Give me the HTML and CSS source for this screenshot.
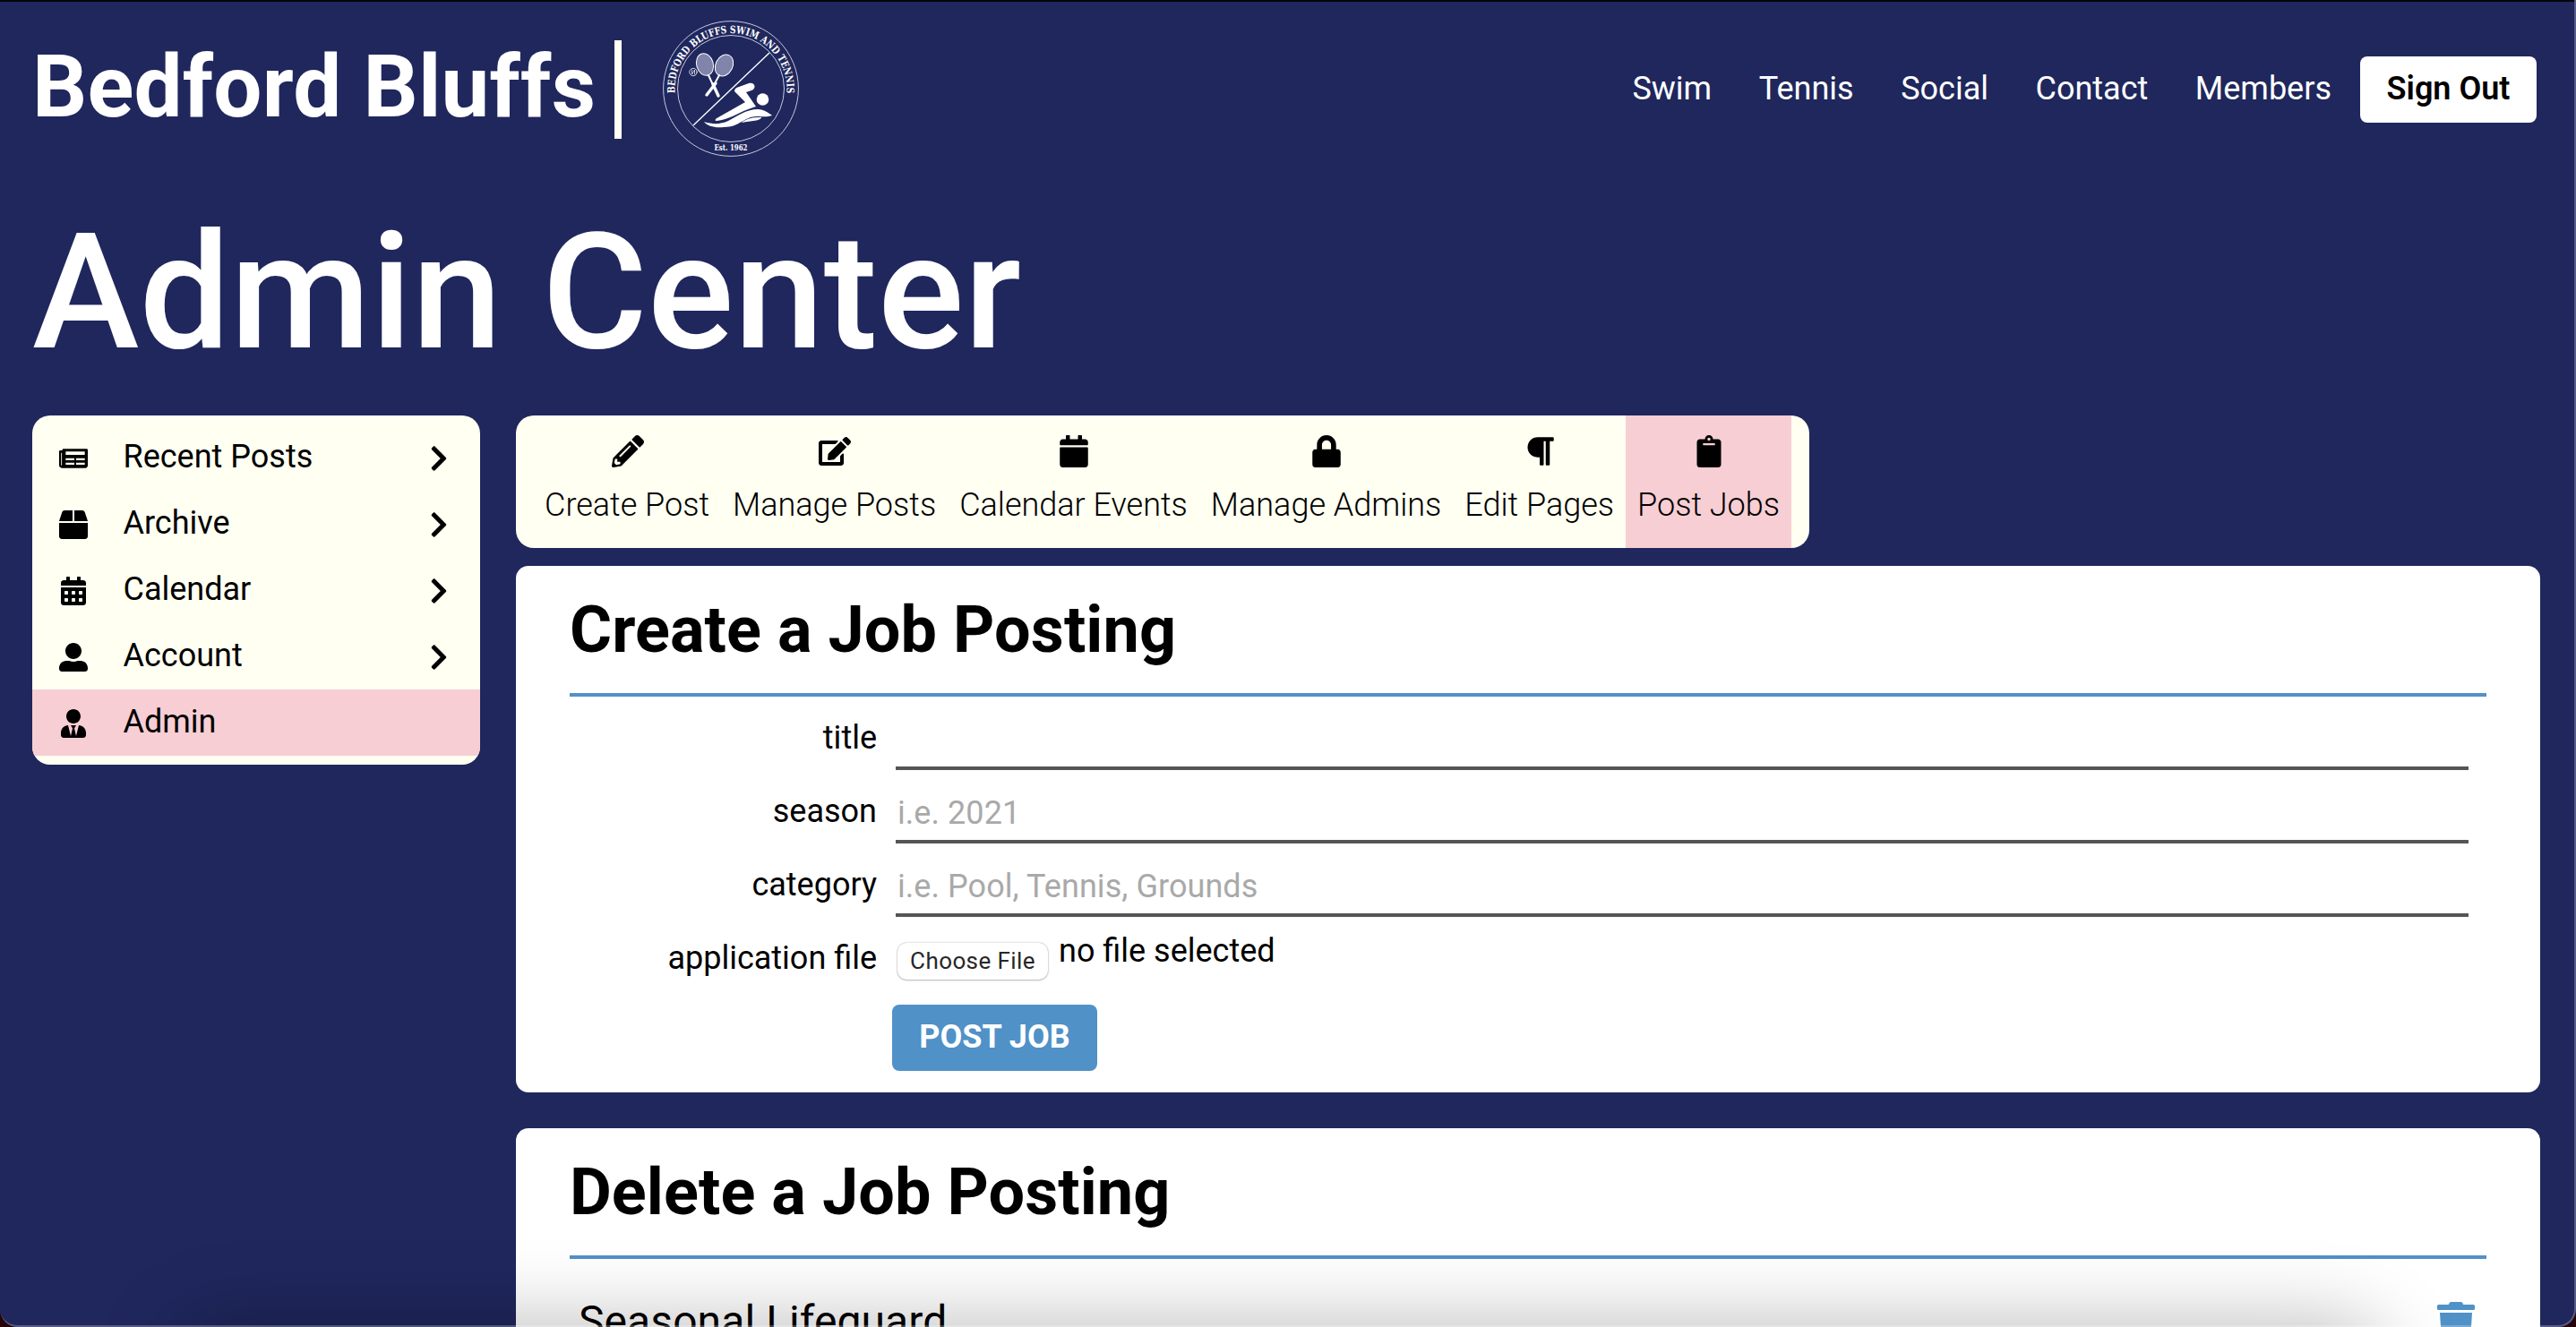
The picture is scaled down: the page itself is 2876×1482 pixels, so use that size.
FILE: index.html
```html
<!DOCTYPE html>
<html lang="en">
<head>
<meta charset="utf-8">
<title>Bedford Bluffs - Admin Center</title>
<link rel="stylesheet" href="styles.css">
</head>
<body>
<div class="window">
  <header class="header">
    <a class="brand"><span class="brand-name">Bedford Bluffs</span></a>
    <svg class="logo" viewBox="0 0 152 152" fill="none" stroke="#fff">
      <defs>
        <path id="arc-top" d="M13.700 81.500A62.500 62.500 0 1 1 138.300 81.500"/>
        <pattern id="mesh" width="2" height="2" patternUnits="userSpaceOnUse"><rect width="2" height="2" fill="#8488ad" stroke="none"/><rect width="1" height="1" fill="#777ba4" stroke="none"/></pattern>
        <symbol id="chevron" viewBox="0 0 320 512"><path d="M285.476 272.971L91.132 467.314c-9.373 9.373-24.569 9.373-33.941 0l-22.667-22.667c-9.357-9.357-9.375-24.522-.04-33.901L188.505 256 34.484 101.255c-9.335-9.379-9.317-24.544.04-33.901l22.667-22.667c9.373-9.373 24.569-9.373 33.941 0L285.475 239.03c9.373 9.372 9.373 24.568.001 33.941z"/></symbol>
      </defs>
      <circle cx="76" cy="76" r="75.4" stroke-width="1" stroke="#c5c8dc"/>
      <circle cx="76" cy="76" r="59.5" stroke-width="1" stroke="#c5c8dc"/>
      <path d="M119 36L34 117" stroke-width="1.4"/>
      <text class="logo-arc"><textPath href="#arc-top" startOffset="50%" text-anchor="middle" textLength="205" lengthAdjust="spacingAndGlyphs">BEDFORD BLUFFS SWIM AND TENNIS</textPath></text>
      <text class="logo-est" x="76" y="144.500" text-anchor="middle" textLength="37" lengthAdjust="spacingAndGlyphs">Est. 1962</text>
      <g stroke-linecap="round">
        <ellipse cx="47" cy="49" rx="9.300" ry="12.500" transform="rotate(-16 47 49)" fill="url(#mesh)" stroke-width="1"/>
        <ellipse cx="68.500" cy="50" rx="9.500" ry="12.500" transform="rotate(27 68.500 50)" fill="url(#mesh)" stroke-width="1"/>
        <path d="M51 61L57 74M63 61L57 72" stroke-width="2"/>
        <path d="M56 71L62 84M59 70L49 83" stroke-width="3.400"/>
        <circle cx="34" cy="57.500" r="4.200" stroke-width=".8"/>
        <path d="M32.500 55v5l3-5v5" stroke-width=".7"/>
      </g>
      <g fill="#fff" stroke="none">
        <circle cx="111.500" cy="88" r="6.800"/>
        <path d="M80 79C80 76 82 75 85 74L96 70C103 68 105 76 99 78L93 80L104 96C98 98 92 100 84 104C76 108 66 112 59 112C58 110 60 109 62 108L92 91L83 82Z"/>
        <path d="M46 113C56 116 64 116 73 112C84 106 94 99 106 99C113 99 118 103 122 106C116 108 112 107 105 107C91 107 86 119 68 119C58 120 50 118 46 113Z"/>
        <path d="M88 114C94 109 100 108 110 108C110 112 98 112 88 114Z"/>
      </g>
    </svg>
    <nav class="nav">
      <a>Swim</a><a>Tennis</a><a>Social</a><a>Contact</a><a>Members</a>
      <button class="sign-out">Sign Out</button>
    </nav>
  </header>

  <h1 class="page-title">Admin Center</h1>

  <div class="layout">
    <aside class="sidebar">
      <a class="side-item">
        <svg class="side-icon" viewBox="0 0 576 512"><path fill-rule="evenodd" d="M552 64H88c-13 0-24 11-24 24v8H24c-13 0-24 11-24 24v272c0 31 25 56 56 56h472c26 0 48-22 48-48V88c0-13-11-24-24-24zM40 144h16v248q-8 16-16 0zM132 118h384v68H132zM132 250h174v40H132zM342 250h174v40H342zM132 342h174v40H132zM342 342h174v40H342z"/></svg>
        <span>Recent Posts</span>
        <svg class="chevron"><use href="#chevron"/></svg>
      </a>
      <a class="side-item">
        <svg class="side-icon" viewBox="0 0 512 512"><path d="M509.5 184.6L458.9 32.8C452.4 13.2 434.1 0 413.4 0H272v192h238.7c-.4-2.500-.4-5-1.200-7.400zM240 0H98.600c-20.700 0-39 13.200-45.500 32.800L2.500 184.600c-.8 2.400-.8 4.900-1.200 7.400H240V0zM0 224v240c0 26.500 21.500 48 48 48h416c26.500 0 48-21.500 48-48V224H0z"/></svg>
        <span>Archive</span>
        <svg class="chevron"><use href="#chevron"/></svg>
      </a>
      <a class="side-item">
        <svg class="side-icon" viewBox="0 0 448 512"><path d="M0 464c0 26.500 21.500 48 48 48h352c26.500 0 48-21.500 48-48V192H0v272zm320-196c0-6.600 5.400-12 12-12h40c6.600 0 12 5.400 12 12v40c0 6.600-5.400 12-12 12h-40c-6.600 0-12-5.400-12-12v-40zm0 128c0-6.600 5.400-12 12-12h40c6.600 0 12 5.400 12 12v40c0 6.600-5.400 12-12 12h-40c-6.600 0-12-5.400-12-12v-40zM192 268c0-6.600 5.400-12 12-12h40c6.600 0 12 5.400 12 12v40c0 6.600-5.400 12-12 12h-40c-6.600 0-12-5.400-12-12v-40zm0 128c0-6.600 5.400-12 12-12h40c6.600 0 12 5.400 12 12v40c0 6.600-5.400 12-12 12h-40c-6.600 0-12-5.400-12-12v-40zM64 268c0-6.600 5.400-12 12-12h40c6.600 0 12 5.400 12 12v40c0 6.600-5.400 12-12 12H76c-6.600 0-12-5.400-12-12v-40zm0 128c0-6.600 5.400-12 12-12h40c6.600 0 12 5.400 12 12v40c0 6.600-5.400 12-12 12H76c-6.600 0-12-5.400-12-12v-40zM400 64h-48V16c0-8.800-7.200-16-16-16h-32c-8.800 0-16 7.200-16 16v48H160V16c0-8.800-7.200-16-16-16h-32c-8.800 0-16 7.200-16 16v48H48C21.500 64 0 85.500 0 112v48h448v-48c0-26.500-21.500-48-48-48z"/></svg>
        <span>Calendar</span>
        <svg class="chevron"><use href="#chevron"/></svg>
      </a>
      <a class="side-item">
        <svg class="side-icon" viewBox="0 0 512 512"><path d="M256 288c79.500 0 144-64.500 144-144S335.500 0 256 0 112 64.500 112 144s64.500 144 144 144zm128 32h-55.100c-22.200 10.200-46.900 16-72.900 16s-50.600-5.800-72.900-16H128C57.300 320 0 377.300 0 448v16c0 26.500 21.500 48 48 48h416c26.500 0 48-21.500 48-48v-16c0-70.700-57.300-128-128-128z"/></svg>
        <span>Account</span>
        <svg class="chevron"><use href="#chevron"/></svg>
      </a>
      <a class="side-item active">
        <svg class="side-icon" viewBox="0 0 448 512"><path d="M224 256c70.700 0 128-57.300 128-128S294.700 0 224 0 96 57.300 96 128s57.300 128 128 128zm95.800 32.600L272 480l-32-136 32-56h-96l32 56-32 136-47.800-191.400C56.900 292 0 350.300 0 422.400V464c0 26.500 21.500 48 48 48h352c26.500 0 48-21.500 48-48v-41.600c0-72.100-56.900-130.400-128.200-133.800z"/></svg>
        <span>Admin</span>
      </a>
    </aside>

    <main class="content">
      <div class="toolbar">
        <a class="tool"><svg viewBox="0 0 512 512"><path d="M497.9 142.1l-46.1 46.1c-4.7 4.7-12.3 4.7-17 0l-111-111c-4.7-4.7-4.7-12.3 0-17l46.1-46.1c18.7-18.7 49.1-18.7 67.9 0l60.1 60.1c18.8 18.7 18.8 49.1 0 67.9zM284.2 99.8L21.6 362.4.4 483.9c-2.9 16.4 11.4 30.6 27.8 27.8l121.5-21.3 262.6-262.6c4.7-4.7 4.7-12.3 0-17l-111-111c-4.8-4.7-12.4-4.7-17.1 0zM124.1 339.9c-5.5-5.5-5.5-14.3 0-19.8l154-154c5.5-5.5 14.3-5.5 19.8 0s5.5 14.3 0 19.8l-154 154c-5.5 5.5-14.3 5.5-19.8 0zM88 424h48v36.3l-64.5 11.3-31.1-31.1L51.7 376H88v48z"/></svg><span>Create Post</span></a>
        <a class="tool"><svg viewBox="0 0 576 512"><path d="M402.6 83.2l90.2 90.2c3.8 3.8 3.8 10 0 13.8L274.4 405.6l-92.8 10.3c-12.4 1.4-22.9-9.1-21.5-21.5l10.3-92.8L388.8 83.2c3.8-3.8 10-3.8 13.8 0zm162-22.9l-48.8-48.8c-15.2-15.2-39.9-15.2-55.2 0l-35.4 35.4c-3.8 3.8-3.8 10 0 13.8l90.2 90.2c3.8 3.8 10 3.8 13.8 0l35.4-35.4c15.2-15.3 15.2-40 0-55.2zM384 346.2V448H64V128h229.8c3.2 0 6.2-1.3 8.5-3.5l40-40c7.6-7.6 2.2-20.5-8.5-20.5H48C21.5 64 0 85.5 0 112v352c0 26.5 21.5 48 48 48h352c26.5 0 48-21.5 48-48V306.2c0-10.7-12.9-16-20.5-8.5l-40 40c-2.2 2.3-3.5 5.3-3.5 8.5z"/></svg><span>Manage Posts</span></a>
        <a class="tool"><svg viewBox="0 0 448 512"><path d="M12 192h424c6.6 0 12 5.4 12 12v260c0 26.5-21.5 48-48 48H48c-26.5 0-48-21.5-48-48V204c0-6.6 5.4-12 12-12zm436-44v-36c0-26.5-21.5-48-48-48h-48V12c0-6.6-5.4-12-12-12h-40c-6.6 0-12 5.4-12 12v52H160V12c0-6.6-5.4-12-12-12h-40c-6.6 0-12 5.4-12 12v52H48C21.5 64 0 85.5 0 112v36c0 6.6 5.4 12 12 12h424c6.6 0 12-5.4 12-12z"/></svg><span>Calendar Events</span></a>
        <a class="tool"><svg viewBox="0 0 448 512"><path d="M400 224h-24v-72C376 68.2 307.8 0 224 0S72 68.2 72 152v72H48c-26.5 0-48 21.5-48 48v192c0 26.5 21.5 48 48 48h352c26.5 0 48-21.5 48-48V272c0-26.5-21.5-48-48-48zm-104 0H152v-72c0-39.7 32.3-72 72-72s72 32.3 72 72v72z"/></svg><span>Manage Admins</span></a>
        <a class="tool"><svg viewBox="0 0 448 512"><path d="M448 48v32a16 16 0 0 1-16 16h-48v368a16 16 0 0 1-16 16h-32a16 16 0 0 1-16-16V96h-32v368a16 16 0 0 1-16 16h-32a16 16 0 0 1-16-16V352h-32a160 160 0 0 1 0-320h240a16 16 0 0 1 16 16z"/></svg><span>Edit Pages</span></a>
        <a class="tool active"><svg viewBox="0 0 384 512"><path d="M384 112v352c0 26.51-21.49 48-48 48H48c-26.51 0-48-21.49-48-48V112c0-26.51 21.49-48 48-48h80c0-35.29 28.71-64 64-64s64 28.71 64 64h80c26.51 0 48 21.49 48 48zM192 40c-13.255 0-24 10.745-24 24s10.745 24 24 24 24-10.745 24-24-10.745-24-24-24m96 114v-20a6 6 0 0 0-6-6H102a6 6 0 0 0-6 6v20a6 6 0 0 0 6 6h180a6 6 0 0 0 6-6z"/></svg><span>Post Jobs</span></a>
      </div>

      <section class="card">
        <h2>Create a Job Posting</h2>
        <form class="form">
          <label for="title">title</label>
          <input class="field" id="title" type="text">
          <label for="season">season</label>
          <input class="field" id="season" type="text" placeholder="i.e. 2021">
          <label for="category">category</label>
          <input class="field" id="category" type="text" placeholder="i.e. Pool, Tennis, Grounds">
          <label>application file</label>
          <div class="file"><button type="button" class="choose">Choose File</button><span>no file selected</span></div>
          <button type="button" class="submit">POST JOB</button>
        </form>
      </section>

      <section class="card">
        <h2>Delete a Job Posting</h2>
        <div class="job">
          <span>Seasonal Lifeguard</span>
          <svg class="trash" viewBox="0 0 448 512"><path d="M432 32H312l-9.400-18.700A24 24 0 0 0 281.100 0H166.800a23.720 23.720 0 0 0-21.400 13.300L136 32H16A16 16 0 0 0 0 48v32a16 16 0 0 0 16 16h416a16 16 0 0 0 16-16V48a16 16 0 0 0-16-16zM53.200 467a48 48 0 0 0 47.900 45h245.800a48 48 0 0 0 47.900-45L416 128H32z"/></svg>
        </div>
      </section>
    </main>
  </div>
  <div class="dock-shadow"></div>
  <div class="window-edge"></div>
</div>
</body>
</html>
```
FILE: styles.css
```css
* { box-sizing: border-box; }

html { background: #000; }

body {
  margin: 0;
  height: 1482px;
  overflow: hidden;
  font-family: Roboto, "Liberation Sans", sans-serif;
  font-size: 36px;
  line-height: 42px;
  color: #000;
}

button, input { font: inherit; border: 0; margin: 0; }

.window {
  position: relative;
  height: 1482px;
  overflow: hidden;
  padding: 0 36px;
  background: #1f275d;
}

/* header */
.header {
  display: flex;
  align-items: center;
  height: 200px;
}

.brand {
  display: flex;
  align-items: center;
  height: 110px;
  padding-right: 21px;
  border-right: 8px solid #fffff2;
}

.brand-name {
  color: #fff;
  font-size: 96px;
  line-height: 112px;
  font-weight: 700;
  letter-spacing: .2px;
  margin-top: -6px;
}

.logo {
  width: 152px;
  height: 152px;
  margin: -2px 0 0 46px;
}

.logo-arc, .logo-est {
  fill: #fff;
  stroke: none;
  font-family: "DejaVu Serif", serif;
  font-weight: 700;
}

.logo-arc { font-size: 11.500px; }
.logo-est { font-size: 8.500px; }

.nav {
  display: flex;
  align-items: center;
  margin-left: auto;
  margin-right: 8px;
  color: #fff;
}

.nav a { margin: -2px 52.500px 0 0; }
.nav a:nth-of-type(5) { margin-right: 32px; }

.sign-out {
  width: 197px;
  height: 74px;
  padding: 0 0 2px;
  border-radius: 8px;
  background: #fff;
  color: #000;
  font-weight: 600;
}

.page-title {
  margin: 0;
  height: 264px;
  padding-top: 21px;
  color: #fff;
  font-size: 180px;
  line-height: 211px;
  font-weight: 500;
  letter-spacing: .15px;
}

.layout {
  display: flex;
  align-items: flex-start;
  gap: 40px;
  padding-right: 4px;
}

/* left menu */
.sidebar {
  flex: none;
  width: 500px;
  padding: 10px 0;
  border-radius: 20px;
  background: #fffff2;
  overflow: hidden;
}

.side-item {
  display: flex;
  align-items: center;
  height: 74px;
  padding: 0 36px 0 30px;
}

.side-item span { flex: 1; margin: -2px 0 0 39.500px; }
.side-icon { width: 32px; height: 32px; margin-top: 2px; }
.chevron { width: 20px; height: 32px; margin-top: 2px; }
.active { background: #f7ced3; }

.content {
  flex: 1;
  display: flex;
  flex-direction: column;
  align-items: flex-start;
}

.toolbar {
  display: flex;
  height: 148px;
  padding: 0 20px 0 19px;
  margin-bottom: 20px;
  border-radius: 20px;
  background: #fffff2;
}

.tool {
  display: flex;
  flex-direction: column;
  align-items: center;
  padding: 22px 13px 0;
  font-weight: 300;
}

.tool svg { width: 36px; height: 36px; margin: 0 0 21px 1px; }

.card {
  align-self: stretch;
  height: 588px;
  margin-bottom: 40px;
  padding: 0 60px;
  border-radius: 14px;
  background: #fff;
}

.card h2 {
  margin: 0;
  height: 146px;
  padding-top: 30px;
  border-bottom: 4px solid #5091c8;
  font-size: 72px;
  line-height: 84px;
  font-weight: 700;
  letter-spacing: .08px;
}

.form {
  display: grid;
  grid-template-columns: 343px 1756px;
  grid-template-rows: 82px 82px 82px 98px 74px;
  column-gap: 21px;
}

.form label { text-align: right; padding-top: 25px; }

.field {
  padding: 28px 2px 10px;
  border-bottom: 4px solid #555;
  background: none;
}

.field::placeholder { color: #a9a9a9; opacity: 1; letter-spacing: .06px; }

.file { display: flex; align-items: flex-start; }
.file span { margin: 17px 0 0 12px; }

.choose {
  width: 168px;
  height: 41px;
  margin: 29px 0 0 2px;
  padding: 0;
  border-radius: 10px;
  background: #fff;
  box-shadow: 0 0 2px rgba(0, 0, 0, .35), 0 1px 2px rgba(0, 0, 0, .2);
  color: #272727;
  font-size: 26px;
  letter-spacing: .4px;
  line-height: 37px;
}

.submit {
  grid-column: 2;
  justify-self: start;
  width: 229px;
  height: 74px;
  margin-left: -4px;
  padding: 0 0 2px;
  border-radius: 8px;
  background: #5091c8;
  color: #fff;
  font-weight: 700;
}

.job {
  display: flex;
  justify-content: space-between;
  padding: 42px 13px 0 10px;
  font-size: 48px;
  line-height: 56px;
  letter-spacing: .08px;
}

.trash { width: 42px; height: 48px; margin-top: 6px; fill: #5091c8; }

/* window chrome: soft shade rising from below, and the window outline */
.dock-shadow {
  position: absolute;
  left: 210px;
  right: 230px;
  top: 1492px;
  height: 80px;
  border-radius: 40px;
  box-shadow: 0 0 86px 18px rgba(0, 0, 0, .25);
}

.window-edge {
  position: absolute;
  inset: 0;
  border: solid rgba(255, 255, 255, .25);
  border-width: 0 2px 2px 0;
  border-radius: 0 0 20px 20px;
  box-shadow: 0 0 0 20px #26040a, inset 0 2px #05050a;
}
```
